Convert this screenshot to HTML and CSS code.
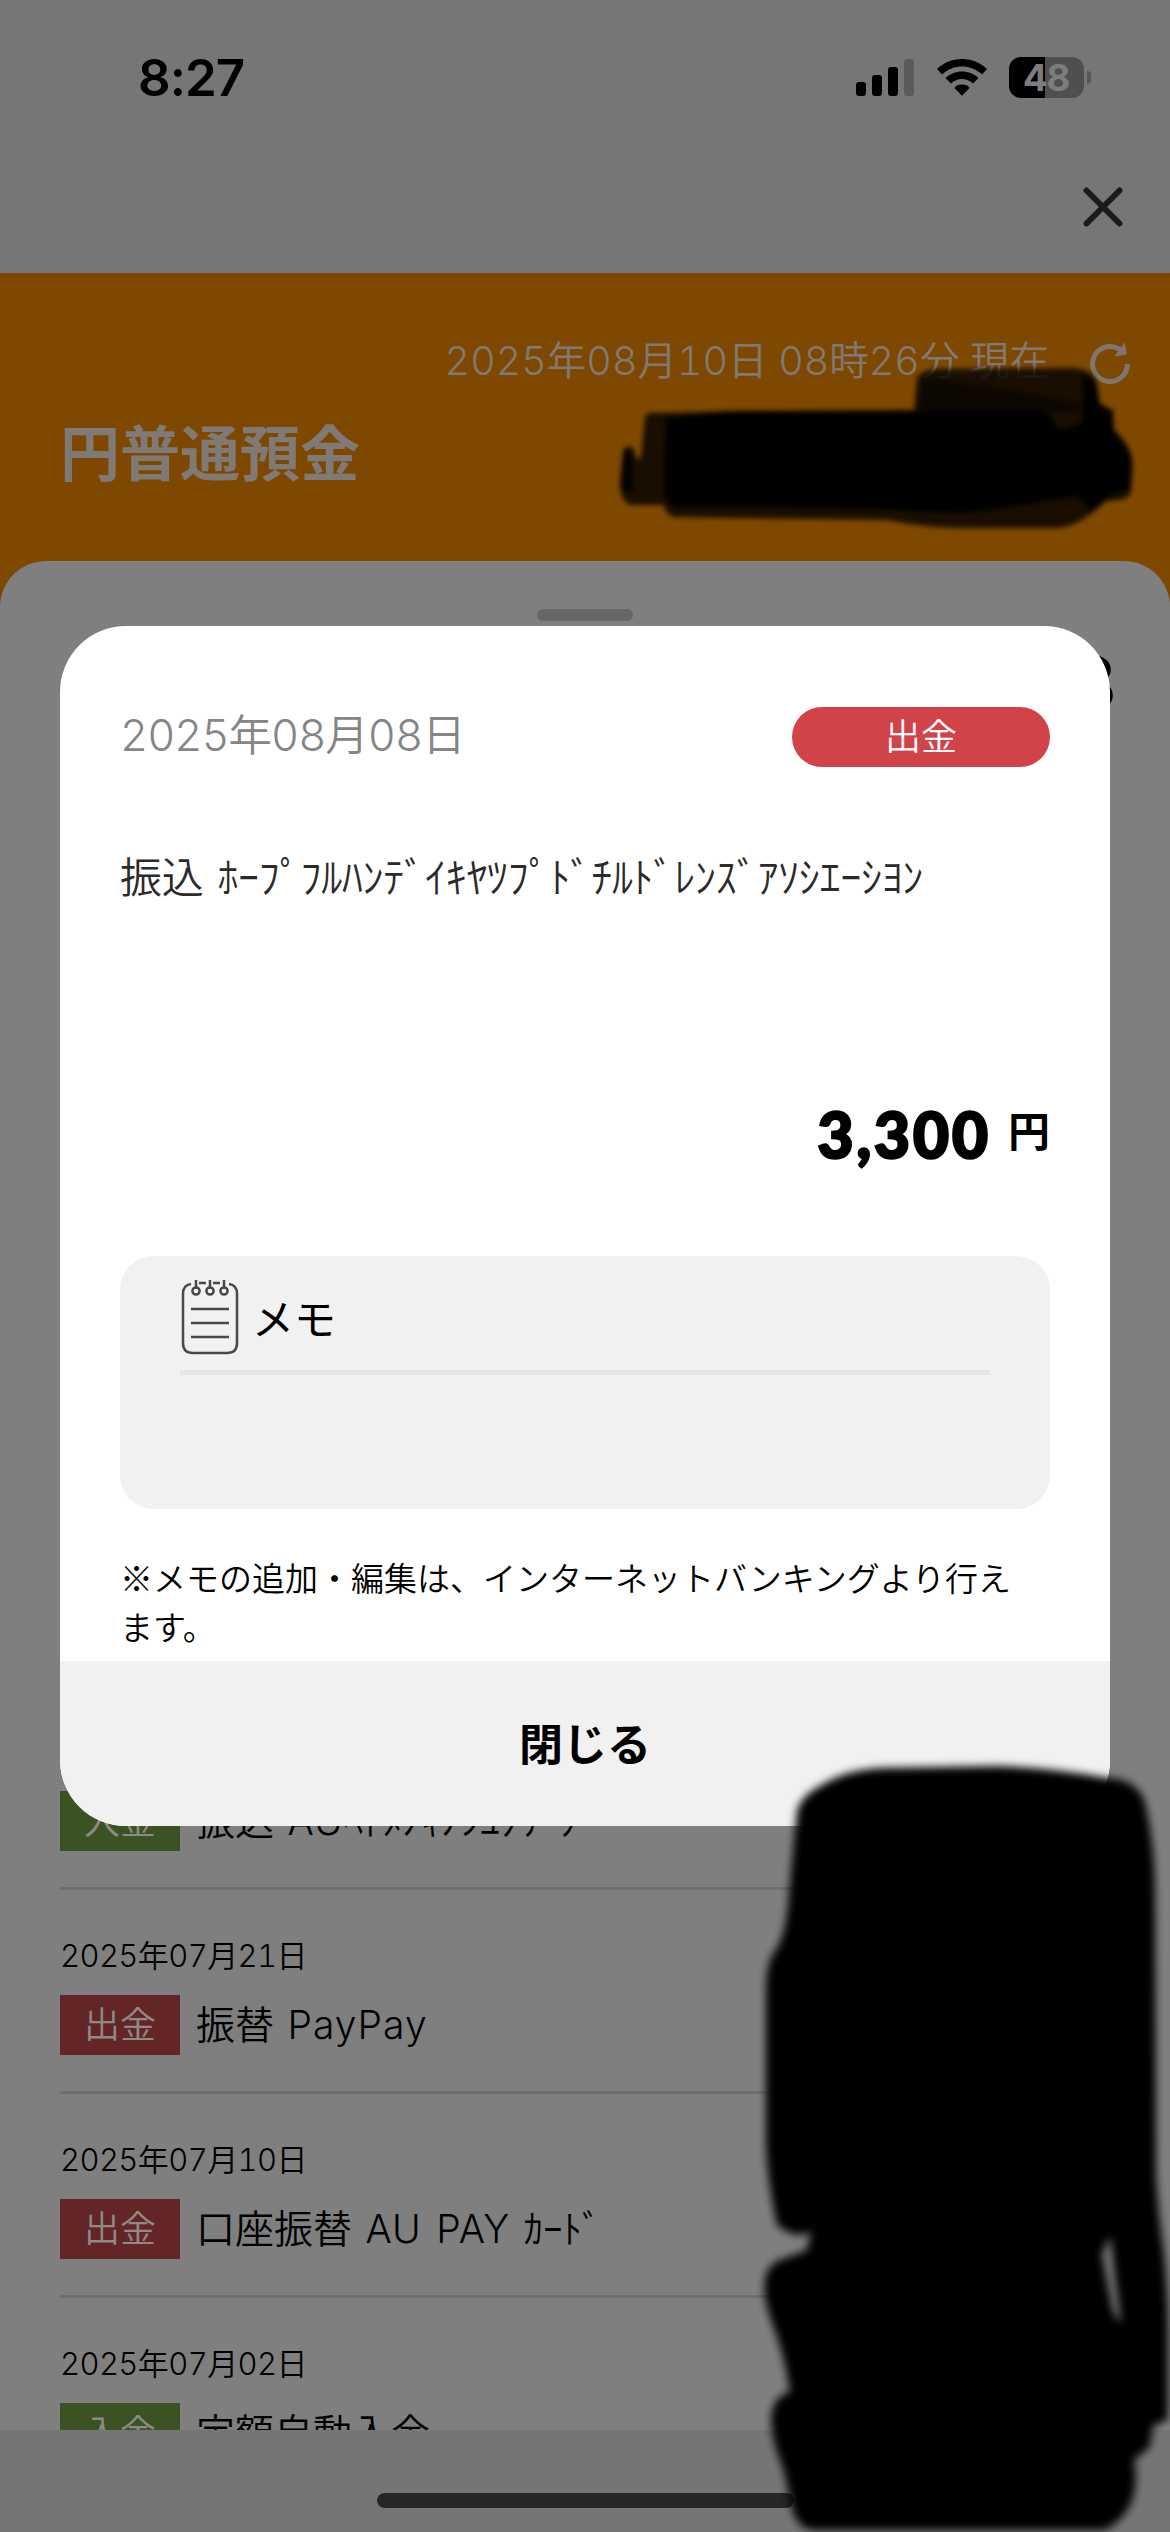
FILE: index.html
```html
<!DOCTYPE html>
<html lang="ja">
<head>
<meta charset="utf-8">
<title>円普通預金</title>
<link rel="stylesheet" href="styles.css">
</head>
<body>
<div class="screen">
  <header class="topbar">
    <div class="status">
      <span class="clock">8:27</span>
      <div class="status-icons">
        <svg class="signal" viewBox="0 0 58 37"><rect y="23" width="10" height="14" rx="3"/><rect x="16" y="16" width="10" height="21" rx="3"/><rect x="32" y="8" width="10" height="29" rx="3"/><rect x="48" width="10" height="37" rx="3" fill="#5b5b5b"/></svg>
        <svg class="wifi" viewBox="0 0 50 37"><path d="M25 0C35 0 44 4 50 10L45 15.500C39 10 32 7.500 25 7.500S11 10 5 15.500L0 10C6 4 15 0 25 0Z"/><path d="M25 12.500C31.500 12.500 37 15 41.500 19L36 24.500C33 21.500 29 20 25 20S17 21.500 14 24.500L8.500 19C13 15 18.500 12.500 25 12.500Z"/><path d="M25 25.500C29 25.500 31 26.500 32.500 29L25 36.800L17.500 29C19 26.500 21 25.500 25 25.500Z"/></svg>
        <div class="battery"><div class="battery-body"><span class="battery-text">48</span></div><i class="battery-cap"></i></div>
      </div>
    </div>
    <svg class="close" viewBox="0 0 40 40"><path d="M3.500 3.500L36.500 36.500M36.500 3.500L3.500 36.500"/></svg>
  </header>

  <section class="account">
    <div class="asof">
      <span class="asof-text">2025年08月10日 08時26分 現在</span>
      <svg class="reload" viewBox="0 0 42 42"><path d="M38.500 22A17.500 17.500 0 1 1 30 7" fill="none" stroke="#7f7670" stroke-width="5"/><path d="M35.500 0L38 12.500L25.500 14.500L29 9L28 4L33 5Z" fill="#7f7670"/></svg>
    </div>
    <h1 class="account-name">円普通預金</h1>
  </section>

  <main class="sheet">
    <div class="grip"></div>
    <div class="month">8</div>
    <ul class="rows">
      <li class="row"><span class="date">2025年07月22日</span><div class="line"><span class="tag in">入金</span><span class="desc">振込 <span class="latin">AU</span>ﾍﾄﾒﾉｷﾉｼﾕｸﾘﾟﾌ</span></div></li>
      <li class="row"><span class="date">2025年07月21日</span><div class="line"><span class="tag out">出金</span><span class="desc">振替 <span class="latin">PayPay</span></span></div></li>
      <li class="row"><span class="date">2025年07月10日</span><div class="line"><span class="tag out">出金</span><span class="desc">口座振替 <span class="latin">AU PAY</span> ｶｰﾄﾞ</span></div></li>
      <li class="row"><span class="date">2025年07月02日</span><div class="line"><span class="tag in">入金</span><span class="desc">定額自動入金</span></div></li>
    </ul>
  </main>

  <footer class="bottom"><div class="home"></div></footer>

  <div class="modal">
    <div class="modal-body">
      <div class="modal-head"><span class="modal-date">2025年08月08日</span><span class="pill">出金</span></div>
      <p class="payee">振込 ﾎｰﾌﾟﾌﾙﾊﾝﾃﾞｲｷﾔﾂﾌﾟﾄﾞﾁﾙﾄﾞﾚﾝｽﾞｱｿｼｴｰｼﾖﾝ</p>
      <div class="amount"><span class="num">3,300</span><span class="yen">円</span></div>
      <div class="memo">
        <div class="memo-head">
          <svg class="memo-icon" viewBox="0 0 58 76"><g fill="none" stroke="#4c4849" stroke-width="2.500"><path d="M10 5Q2 6 2 15V64Q2 74 12 74H46Q56 74 56 64V15Q56 6 48 5M18 4H25M32 4H39" /><path d="M10 30H48M10 44H48M10 58H48"/><path d="M15 1V10M29 1V10M43 1V10"/><circle cx="15" cy="12" r="3.600"/><circle cx="29" cy="12" r="3.600"/><circle cx="43" cy="12" r="3.600"/></g></svg>
          <span>メモ</span>
        </div>
      </div>
      <p class="note">※メモの追加・編集は、インターネットバンキングより行えます。</p>
    </div>
    <button class="dismiss">閉じる</button>
  </div>

  <svg class="ink" viewBox="0 0 1170 2532">
    <defs><filter id="soft" x="-5%" y="-5%" width="110%" height="110%"><feGaussianBlur stdDeviation="2.500"/></filter><filter id="softer" x="-5%" y="-5%" width="110%" height="110%"><feGaussianBlur stdDeviation="4.500"/></filter></defs>
    <g filter="url(#soft)">
      <path fill-opacity=".8" d="M645 417Q646 412 656 413L735 411L914 410L917 378Q920 371 937 369L1072 368Q1096 368 1098 390L1100 404Q1114 406 1114 430Q1132 445 1133 465L1131 492Q1129 501 1106 501Q1078 528 1056 528H960Q920 527 888 520L673 517Q664 512 664 505H630Q620 500 620 484L623 452Q625 444 633 448L637 460L641 457Z"/>
      <path d="M666 418L735 411H1046L1060 430L1098 418L1115 432L1130 455V488L1114 494L1090 510L1078 496L990 510L960 513Q850 508 760 507L672 507L664 495Z"/>
      <path d="M1083 376Q1095 375 1097 392L1100 406L1113 410V440H1082Z"/>
      <path fill-opacity=".8" d="M624 450Q633 445 633 460V490Q625 497 620 485Z"/>
      <path fill-opacity=".5" d="M924 378L1000 388L1080 403V412H918Z"/>
    </g>
    <g filter="url(#softer)">
      <path fill-rule="evenodd" d="M797 1811Q801 1796 820 1786Q845 1770 880 1768L997 1766Q1055 1768 1107 1778Q1143 1779 1147 1812Q1155 1850 1155 1892L1156 2174Q1158 2212 1163 2245Q1168 2290 1168 2326V2420L1153 2426L1150 2447L1134 2460Q1143 2510 1105 2530H815Q795 2530 790 2500Q785 2470 778 2455Q760 2400 790 2392Q785 2355 770 2317Q755 2270 780 2260L807 2250L811 2231Q797 2241 777 2225Q767 2180 766 2144V1992Q766 1960 776 1950Q785 1935 788 1905Q791 1870 797 1811ZM1110 2236L1102 2254L1113 2312L1121 2324Z"/>
    </g>
  </svg>
</div>
</body>
</html>
```
FILE: styles.css
```css
* { box-sizing: border-box; margin: 0; padding: 0; }
body { font-family: "Inter", "Noto Sans CJK JP", sans-serif; font-feature-settings: "tnum"; font-weight: 350; color: #000; }
.screen { position: relative; width: 1170px; height: 2532px; overflow: hidden; display: flex; flex-direction: column; background: #7f7f7f; }

.topbar { height: 273px; flex: none; background: #767676; display: flex; flex-direction: column; align-items: flex-end; }
.status { width: 100%; height: 187px; padding: 57px 79px 0 138px; display: flex; justify-content: space-between; align-items: flex-start; }
.clock { font-size: 51px; line-height: 42px; font-weight: 600; letter-spacing: -1px; font-feature-settings: normal; }
.status-icons { display: flex; align-items: center; height: 41px; }
.signal { width: 58px; height: 37px; margin-right: 23px; }
.wifi { width: 50px; height: 37px; margin-right: 22px; }
.battery { display: flex; align-items: center; gap: 3px; }
.battery-body { width: 75px; height: 41px; border-radius: 12px; background: linear-gradient(90deg, #000 36px, #4f4f4f 36px); text-align: center; }
.battery-text { font-size: 37px; line-height: 41px; font-weight: 700; color: #7d7d7d; letter-spacing: -1px; display: block; }
.battery-cap { width: 4px; height: 13px; border-radius: 0 4px 4px 0; background: #565656; }
.close { width: 40px; height: 40px; margin-right: 47px; }
.close path { stroke: #1b1b1b; stroke-width: 6; stroke-linecap: round; }

.account { height: 350px; flex: none; background: #7e4800; color: #7f7a76; padding: 60px 39px 0 60px; }
.asof { display: flex; justify-content: flex-end; align-items: center; height: 60px; }
.asof-text { font-size: 39.500px; line-height: 56px; padding-bottom: 5px; }
.reload { width: 42px; height: 42px; margin-left: 40px; }
.account-name { font-size: 60px; line-height: 80px; font-weight: 700; margin-top: 21px; }

.sheet { position: relative; height: 1869px; flex: none; margin-top: -62px; border-radius: 46px 46px 0 0; background: #7f7f7f; overflow: hidden; }
.grip { width: 96px; height: 12px; border-radius: 6px; background: #666; margin: 48px auto 0; }
.month { height: 0; text-align: right; padding-right: 54px; font-size: 74px; font-weight: 700; line-height: 124px; }
.rows { list-style: none; margin: 1065px 60px 0; }
.row { height: 204px; border-bottom: 3px solid #6f6f6f; padding-top: 44px; display: flex; flex-direction: column; }
.date { font-size: 31px; line-height: 44px; height: 61px; letter-spacing: -0.600px; }
.line { display: flex; align-items: center; gap: 16px; height: 60px; white-space: nowrap; }
.tag { width: 120px; height: 60px; line-height: 60px; text-align: center; font-size: 36px; color: #8f8a86; }
.in { background: #3b5323; }
.out { background: #642526; }
.desc { font-size: 39px; line-height: 60px; word-spacing: 3px; }
.latin { letter-spacing: 1px; }

.bottom { flex: none; height: 102px; background: #757575; padding-top: 63px; }
.home { width: 417px; height: 15px; border-radius: 8px; margin: 0 auto; background: #262626; }

.modal { position: absolute; left: 60px; top: 626px; width: 1050px; height: 1200px; border-radius: 66px; overflow: hidden; background: #fff; display: flex; flex-direction: column; }
.modal-body { flex: 1; padding: 81px 60px 0; }
.modal-head { display: flex; justify-content: space-between; align-items: center; height: 60px; }
.modal-date { font-size: 43.500px; line-height: 56px; padding-bottom: 5px; letter-spacing: -1px; color: #858585; }
.pill { width: 258px; height: 60px; border-radius: 30px; background: #d14349; color: #fff; font-size: 36px; line-height: 61px; text-align: center; }
.payee { font-size: 42px; line-height: 60px; margin-top: 81px; color: #2b2b2b; white-space: nowrap; letter-spacing: -0.300px; word-spacing: 3px; }
.amount { display: flex; justify-content: flex-end; align-items: center; height: 80px; margin-top: 187px; gap: 17px; }
.num { font-family: "Lato", sans-serif; font-size: 62px; font-weight: 900; letter-spacing: 3px; -webkit-text-stroke: 2.500px #000; line-height: 76px; padding-bottom: 3px; }
.yen { font-size: 42px; font-weight: 700; line-height: 60px; padding-bottom: 7px; }
.memo { height: 253px; margin-top: 81px; border-radius: 34px; background: #f1f1f2; padding: 0 60px; }
.memo-head { height: 119px; padding-top: 7px; border-bottom: 5px solid #e5e4ea; display: flex; align-items: center; gap: 13px; font-size: 42px; font-weight: 400; }
.memo-icon { width: 58px; height: 76px; margin-left: 1px; }
.note { font-family: "Noto Sans CJK JP", sans-serif; font-size: 33px; line-height: 49px; margin-top: 44px; width: 910px; }
.dismiss { height: 165px; border: 0; padding-bottom: 4px; background: #f1f1f1; font-family: inherit; font-size: 44px; font-weight: 700; color: #000; }

.ink { position: absolute; inset: 0; width: 1170px; height: 2532px; }
```
